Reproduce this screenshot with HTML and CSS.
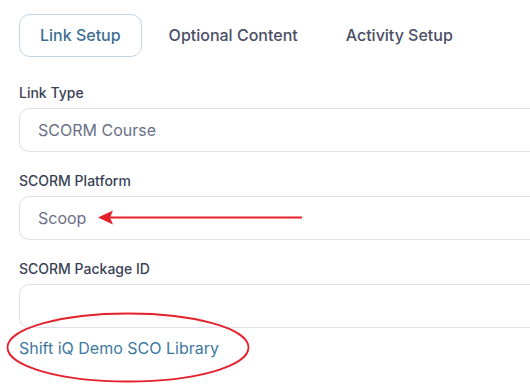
FILE: index.html
```html
<!DOCTYPE html>
<html lang="en">
<head>
    <meta charset="UTF-8">
    <meta name="viewport" content="width=device-width, initial-scale=1.0">
    <title>Link Setup</title>
    <link rel="stylesheet" href="styles.css">
</head>
<body>
    <main class="page">
        <nav class="tabs">
            <div class="tab active">Link Setup</div>
            <div class="tab">Optional Content</div>
            <div class="tab">Activity Setup</div>
        </nav>
        <section class="form">
            <div class="field">
                <label>Link Type</label>
                <div class="input">SCORM Course</div>
            </div>
            <div class="field">
                <label>SCORM Platform</label>
                <div class="input">Scoop</div>
            </div>
            <div class="field">
                <label>SCORM Package ID</label>
                <div class="input"></div>
                <a class="help-link" href="#">Shift iQ Demo SCO Library</a>
            </div>
        </section>

        <!-- annotations drawn over the form -->
        <svg class="marks" width="530" height="384" viewBox="0 0 530 384">
            <line x1="110" y1="217.5" x2="302" y2="217.5" stroke="#e4202a" stroke-width="2"/>
            <polygon points="98,217.5 113,210.5 110,217.5 113,224.5" fill="#e4202a"/>
            <ellipse cx="128" cy="347.5" rx="120.5" ry="34" fill="none" stroke="#e4202a" stroke-width="1.8"/>
        </svg>
    </main>
</body>
</html>
```

FILE: styles.css
```css
* {
    box-sizing: border-box;
    margin: 0;
    padding: 0;
}
body {
    background-color: #fff;
    font-family: 'Inter', 'Roboto', sans-serif;
    overflow: hidden;
}
.page {
    position: relative;
    width: 530px;
    height: 384px;
    padding: 14px 0 0 19px;
}
.tabs {
    display: flex;
    gap: 6px;
}
.tab {
    padding: 10px 20px;
    border: 1px solid transparent;
    border-radius: 11px;
    font-size: 16px;
    font-weight: 500;
    line-height: 21px;
    color: #4a4f66;
}
.tab.active {
    border-color: #c4d5e1;
    color: #3e6f92;
}
.form {
    margin-top: 26px;
    display: flex;
    flex-direction: column;
    gap: 19px;
}
.field label {
    display: block;
    font-size: 14px;
    font-weight: 500;
    line-height: 20px;
    margin-bottom: 5px;
    color: #3a4255;
}
/* the inputs run on past the right edge of the frame */
.input {
    height: 44px;
    padding: 0 18px;
    border: 1px solid #e0dfea;
    border-right: none;
    border-radius: 10px 0 0 10px;
    display: flex;
    align-items: center;
    font-size: 16px;
    color: #6a6f87;
}
.help-link {
    display: inline-block;
    margin-top: 8px;
    font-size: 16px;
    line-height: 24px;
    color: #3d79a2;
    text-decoration: none;
}
.marks {
    position: absolute;
    top: 0;
    left: 0;
    pointer-events: none;
}
```
